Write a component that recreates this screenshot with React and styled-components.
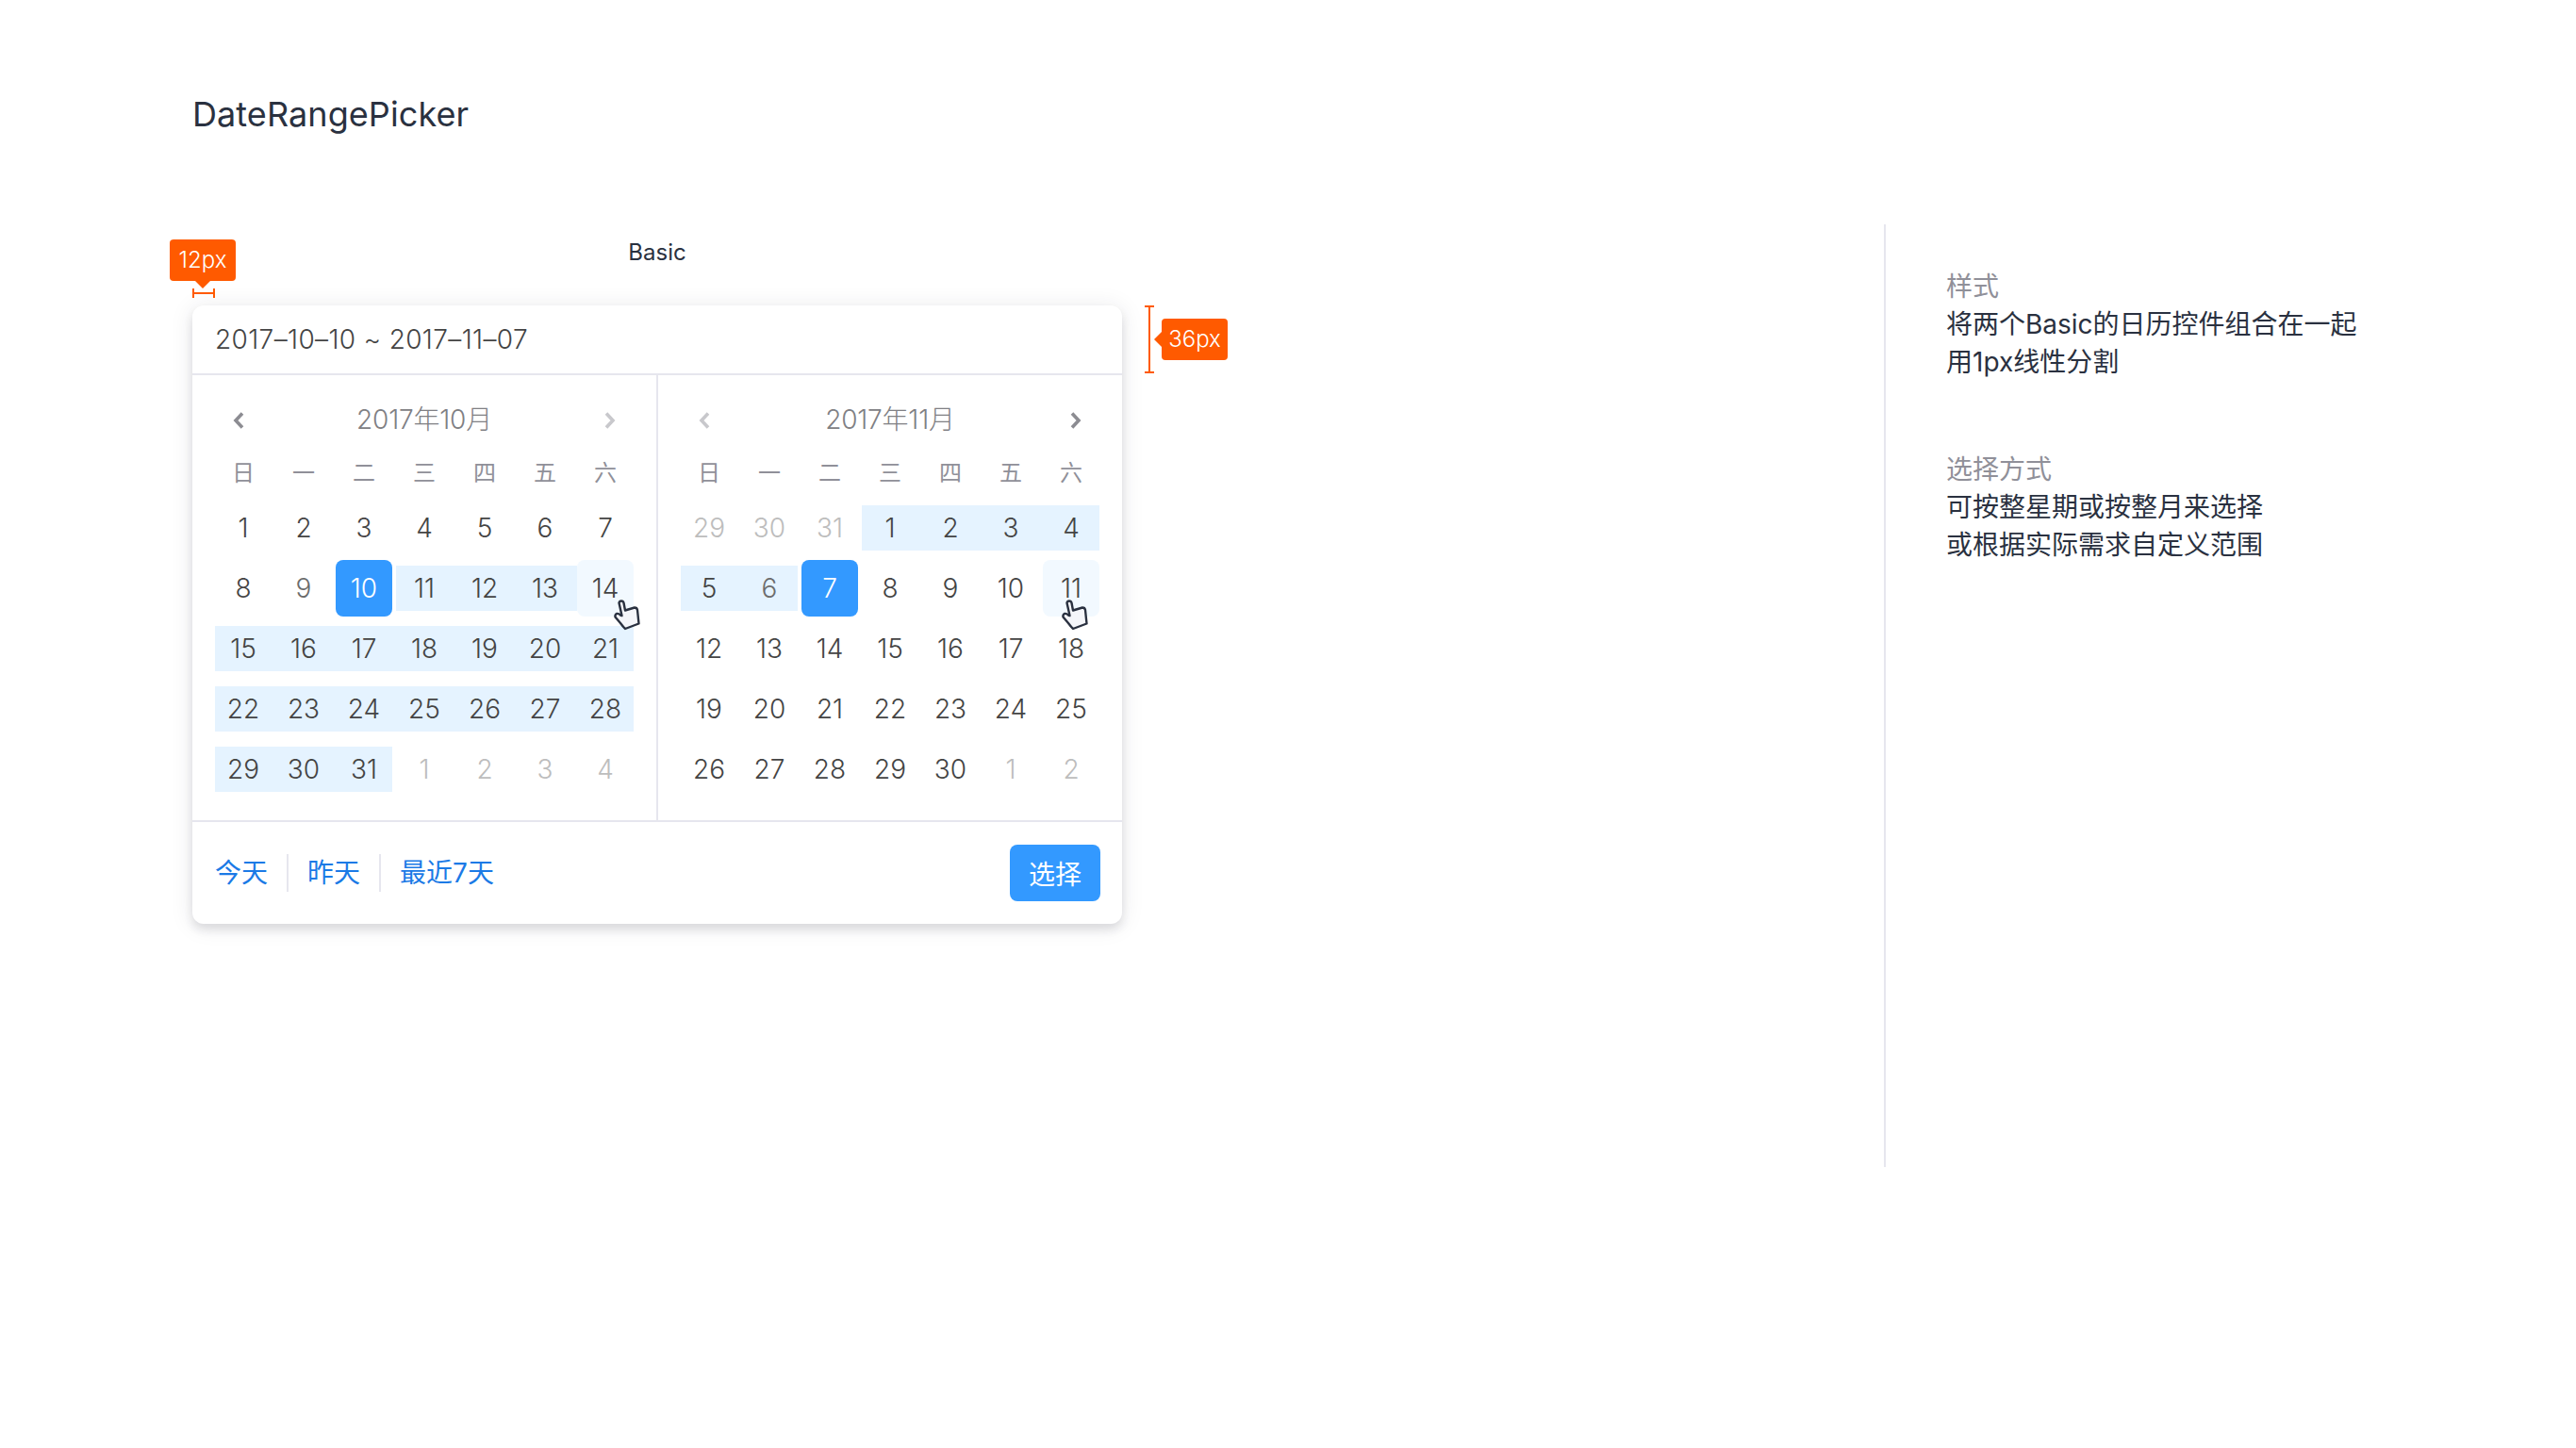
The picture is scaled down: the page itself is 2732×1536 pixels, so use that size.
import React from 'react'
import styled, { createGlobalStyle } from 'styled-components'

const GlobalStyle = createGlobalStyle`
  html, body {
    margin: 0;
    background: #fff;
    font-family: Inter, "Noto Sans CJK SC", sans-serif;
  }
`

const weekDays = ['日', '一', '二', '三', '四', '五', '六']

// state per day: m = other month, r = in range, j = range joins next cell, s = selected, h = hovered, f = faded
const october = [
  [1], [2], [3], [4], [5], [6], [7],
  [8], [9, 'f'], [10, 's'], [11, 'rj'], [12, 'rj'], [13, 'rj'], [14, 'h'],
  [15, 'rj'], [16, 'rj'], [17, 'rj'], [18, 'rj'], [19, 'rj'], [20, 'rj'], [21, 'r'],
  [22, 'rj'], [23, 'rj'], [24, 'rj'], [25, 'rj'], [26, 'rj'], [27, 'rj'], [28, 'r'],
  [29, 'rj'], [30, 'rj'], [31, 'r'], [1, 'm'], [2, 'm'], [3, 'm'], [4, 'm'],
]

const november = [
  [29, 'm'], [30, 'm'], [31, 'm'], [1, 'rj'], [2, 'rj'], [3, 'rj'], [4, 'r'],
  [5, 'rj'], [6, 'rf'], [7, 's'], [8], [9], [10], [11, 'h'],
  [12], [13], [14], [15], [16], [17], [18],
  [19], [20], [21], [22], [23], [24], [25],
  [26], [27], [28], [29], [30], [1, 'm'], [2, 'm'],
]

const Chevron = ({ dir, light }) => (
  <ChevronSvg viewBox="0 0 12 18" $light={light}>
    <path d={dir === 'left' ? 'M10 1.5 L3 9 L10 16.5' : 'M2 1.5 L9 9 L2 16.5'} />
  </ChevronSvg>
)

const Hand = ({ offset }) => (
  <HandSvg viewBox="0 0 30 34" $offset={offset}>
    <path d="M6.5 4.5 Q7 2.5 9 2.5 Q11 2.5 11.5 4.5 L13 12.5 L23 9.5 Q25.5 9.5 26 12 L27.5 26.5 L13 32 Q11 30 8 26 L2.5 19.5 Q2 17 4 16 Q6 15.5 8 17.5 L9.5 18 Z" />
  </HandSvg>
)

function Calendar({ title, days, leftLight, rightLight, handOffset }) {
  return (
    <Panel>
      <MonthBar>
        <Chevron dir="left" light={leftLight} />
        <MonthTitle>{title}</MonthTitle>
        <Chevron dir="right" light={rightLight} />
      </MonthBar>
      <WeekRow>
        {weekDays.map((d) => <WeekDay key={d}>{d}</WeekDay>)}
      </WeekRow>
      <DayGrid>
        {days.map(([n, state = ''], i) => (
          <Day
            key={i}
            $other={state.includes('m')}
            $faded={state.includes('f')}
            $range={state.includes('r')}
            $join={state.includes('j')}
            $selected={state.includes('s')}
            $hover={state.includes('h')}
          >
            <span>{n}</span>
            {state.includes('h') && <Hand offset={handOffset} />}
          </Day>
        ))}
      </DayGrid>
    </Panel>
  )
}

export default function App() {
  return (
    <Page>
      <GlobalStyle />
      <Title>DateRangePicker</Title>
      <Content>
        <Demo>
          <Label>Basic</Label>
          <Card>
            <Tip12>
              12px
              <WidthMark />
            </Tip12>
            <HeightMark />
            <Tip36>36px</Tip36>
            <InputRow>2017–10–10 ~ 2017–11–07</InputRow>
            <Panels>
              <Calendar title="2017年10月" days={october} rightLight handOffset={40} />
              <Calendar title="2017年11月" days={november} leftLight handOffset={21} />
            </Panels>
            <Footer>
              <Shortcuts>
                <Shortcut>今天</Shortcut>
                <Shortcut>昨天</Shortcut>
                <Shortcut>最近7天</Shortcut>
              </Shortcuts>
              <Confirm>选择</Confirm>
            </Footer>
          </Card>
        </Demo>
        <Notes>
          <NoteBlock>
            <NoteTitle>样式</NoteTitle>
            <NoteText>将两个Basic的日历控件组合在一起</NoteText>
            <NoteText>用1px线性分割</NoteText>
          </NoteBlock>
          <NoteBlock>
            <NoteTitle>选择方式</NoteTitle>
            <NoteText>可按整星期或按整月来选择</NoteText>
            <NoteText>或根据实际需求自定义范围</NoteText>
          </NoteBlock>
        </Notes>
      </Content>
    </Page>
  )
}

const Page = styled.div`
  width: 2732px;
  height: 1536px;
  padding: 99px 0 0 204px;
  box-sizing: border-box;
  overflow: hidden;
  background: #fff;
`

const Title = styled.h1`
  margin: 0;
  font-size: 36px;
  line-height: 44px;
  font-weight: 400;
  letter-spacing: 0.08px;
  color: #2a3140;
`

const Content = styled.div`
  display: flex;
  align-items: flex-start;
  margin-top: 95px;
`

const Demo = styled.div`
  width: 986px;
  padding-top: 13px;
`

const Label = styled.div`
  font-size: 24px;
  line-height: 34px;
  text-align: center;
  color: #2a3140;
  margin-bottom: 39px;
`

const Card = styled.div`
  position: relative;
  background: #fff;
  border-radius: 12px;
  box-shadow: 0 6px 10px rgba(40, 44, 60, 0.12), 0 2px 24px rgba(40, 44, 60, 0.1);
`

const Tooltip = styled.div`
  position: absolute;
  width: 70px;
  height: 44px;
  border-radius: 4px;
  background: #ff5a00;
  color: #fff;
  font-size: 24px;
  font-weight: 300;
  line-height: 44px;
  text-align: center;
  &::after {
    content: '';
    position: absolute;
    border: 8px solid transparent;
  }
`

const Tip12 = styled(Tooltip)`
  left: -24px;
  top: -70px;
  &::after {
    left: 27px;
    top: 44px;
    border-top-color: #ff5a00;
    border-bottom-width: 0;
  }
`

const WidthMark = styled.div`
  position: absolute;
  left: 24px;
  top: 52px;
  width: 24px;
  height: 10px;
  box-sizing: border-box;
  border-left: 2px solid #ff5a00;
  border-right: 2px solid #ff5a00;
  background: linear-gradient(#ff5a00, #ff5a00) center / 100% 2px no-repeat;
`

const HeightMark = styled.div`
  position: absolute;
  left: 1010px;
  top: 0;
  width: 10px;
  height: 72px;
  box-sizing: border-box;
  border-top: 2px solid #ff5a00;
  border-bottom: 2px solid #ff5a00;
  background: linear-gradient(#ff5a00, #ff5a00) center / 2px 100% no-repeat;
`

const Tip36 = styled(Tooltip)`
  left: 1028px;
  top: 14px;
  &::after {
    left: -8px;
    top: 14px;
    border-right-color: #ff5a00;
    border-left-width: 0;
  }
`

const InputRow = styled.div`
  height: 72px;
  padding: 0 24px;
  font-size: 28px;
  font-weight: 300;
  letter-spacing: 0.37px;
  line-height: 72px;
  color: #444;
  border-bottom: 2px solid #e6e6ee;
`

const Panels = styled.div`
  display: flex;
  height: 472px;
`

const Panel = styled.div`
  width: 492px;
  box-sizing: border-box;
  padding: 0 24px;
  & + & {
    width: 494px;
    border-left: 2px solid #e6e6ee;
  }
`

const MonthBar = styled.div`
  display: flex;
  align-items: center;
  justify-content: space-between;
  width: 444px;
  height: 96px;
  padding: 0 19px 0 19px;
  box-sizing: border-box;
`

const ChevronSvg = styled.svg`
  width: 12px;
  height: 18px;
  path {
    fill: none;
    stroke: ${(p) => (p.$light ? '#c8c8cc' : '#8c8c92')};
    stroke-width: 3.6;
  }
`

const MonthTitle = styled.div`
  font-size: 28px;
  line-height: 34px;
  margin-top: -2px;
  font-weight: 300;
  letter-spacing: -0.2px;
  color: #808084;
`

const WeekRow = styled.div`
  display: grid;
  grid-template-columns: repeat(7, 60px);
  column-gap: 4px;
  height: 32px;
  margin-top: -8px;
  margin-bottom: 12px;
`

const WeekDay = styled.div`
  font-size: 24px;
  line-height: 24px;
  height: 32px;
  display: flex;
  align-items: center;
  justify-content: center;
  color: #909099;
`

const DayGrid = styled.div`
  display: grid;
  grid-template-columns: repeat(7, 60px);
  grid-auto-rows: 60px;
  gap: 4px;
  margin-top: 12px;
`

const Day = styled.div`
  position: relative;
  display: flex;
  align-items: center;
  justify-content: center;
  font-size: 28px;
  font-weight: 300;
  border-radius: 8px;
  color: ${(p) => {
    if (p.$selected) return '#fff'
    if (p.$other) return '#bdbdbd'
    if (p.$faded) return '#6c6c6c'
    return '#444'
  }};
  background: ${(p) => {
    if (p.$selected) return '#3399ff'
    if (p.$hover) return '#f2f9ff'
    return 'transparent'
  }};
  span {
    position: relative;
  }
  &::before {
    content: '';
    display: ${(p) => (p.$range ? 'block' : 'none')};
    position: absolute;
    top: 6px;
    bottom: 6px;
    left: 0;
    right: ${(p) => (p.$join ? '-4px' : '0')};
    background: #e5f3ff;
  }
`

const HandSvg = styled.svg`
  position: absolute;
  left: ${(p) => p.$offset - 2}px;
  top: 41px;
  width: 30px;
  height: 34px;
  z-index: 2;
  path {
    fill: #f5f6fa;
    stroke: #2a3140;
    stroke-width: 2.4;
    stroke-linejoin: round;
  }
`

const Footer = styled.div`
  display: flex;
  align-items: center;
  justify-content: space-between;
  height: 108px;
  padding: 0 23px 0 24px;
  border-top: 2px solid #e6e6ee;
`

const Shortcuts = styled.div`
  display: flex;
  align-items: center;
`

const Shortcut = styled.div`
  height: 40px;
  font-size: 28px;
  line-height: 40px;
  color: #1b7ae6;
  & + & {
    margin-left: 20px;
    padding-left: 20px;
    border-left: 2px solid #e6e6ee;
  }
`

const Confirm = styled.button`
  width: 96px;
  height: 60px;
  border: none;
  border-radius: 8px;
  padding: 0;
  background: #3399ff;
  color: #fff;
  font-family: inherit;
  font-size: 28px;
`

const Notes = styled.div`
  margin-left: 808px;
  width: 560px;
  height: 1000px;
  box-sizing: border-box;
  padding: 46px 0 0 64px;
  border-left: 2px solid #e6e6ee;
`

const NoteBlock = styled.div`
  & + & {
    margin-top: 74px;
  }
`

const NoteTitle = styled.div`
  font-size: 28px;
  line-height: 40px;
  color: #909099;
`

const NoteText = styled.div`
  font-size: 28px;
  line-height: 40px;
  color: #2a3140;
`
